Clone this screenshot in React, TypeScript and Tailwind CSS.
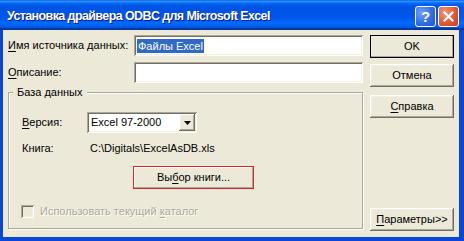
import React from "react";

const U = ({ c }: { c: string }) => (
  <span className="underline underline-offset-[2px] decoration-[1px]">{c}</span>
);

const raised =
  "shadow-[inset_-1px_-1px_#716F64,inset_1px_1px_#FFFFFF,inset_-2px_-2px_#ACA899,inset_2px_2px_#F1EFE2]";
const sunken =
  "shadow-[inset_1px_1px_#ACA899,inset_-1px_-1px_#FFFFFF,inset_2px_2px_#716F64,inset_-2px_-2px_#F1EFE2]";

function Btn({ children, cls = "" }: { children: React.ReactNode; cls?: string }) {
  return (
    <div
      className={`w-[84px] h-[23px] flex items-center justify-center bg-[#ECE9D8] text-black ${raised} ${cls}`}
    >
      {children}
    </div>
  );
}

export default function App() {
  return (
    <div
      className="w-[464px] h-[241px] flex flex-col bg-[#0A47D8] overflow-hidden text-[11px] leading-[13px] text-black"
      style={{ fontFamily: '"Liberation Sans", Arial, sans-serif' }}
    >
      {/* Title bar */}
      <div className="h-[30px] flex items-center pl-[7px] pr-[5px] pt-[2px] bg-[linear-gradient(180deg,#0058EE_0%,#3593FF_4%,#288EFF_6%,#127DFF_8%,#036FFC_10%,#0262EE_14%,#0057E5_20%,#0054E3_24%,#0055EB_56%,#005BF5_66%,#026AFE_76%,#0062EF_86%,#0052D6_92%,#0040AB_94%,#003092_100%)]">
        <div className="flex-1 text-white font-bold text-[12.5px] tracking-[-0.6px] leading-[16px] [text-shadow:1px_1px_0_#0A1883]">
          Установка драйвера ODBC для Microsoft Excel
        </div>
        <div className="flex gap-[2px]">
          <div className="w-[21px] h-[21px] rounded-[3px] border border-white bg-[radial-gradient(circle_at_30%_30%,#6FA0F7,#2F68E8_60%,#2158D8)] flex items-center justify-center text-white font-bold text-[15px] leading-none">
            ?
          </div>
          <div className="w-[21px] h-[21px] rounded-[3px] border border-white bg-[radial-gradient(circle_at_30%_30%,#F0957A,#E0542D_60%,#C8401A)] flex items-center justify-center">
            <svg width="11" height="11" viewBox="0 0 11 11">
              <path d="M1.5 1.5 L9.5 9.5 M9.5 1.5 L1.5 9.5" stroke="#fff" strokeWidth="2.2" strokeLinecap="square" />
            </svg>
          </div>
        </div>
      </div>

      {/* Body */}
      <div className="flex-1 flex ml-[3px] mr-[5px] mb-[4px] bg-[#ECE9D8]">
        {/* Left column */}
        <div className="flex flex-col pl-[5px] pt-[5px]">
          <div className="flex items-center h-[21px]">
            <div className="w-[126px]">
              <U c="И" />мя источника данных:
            </div>
            <div className={`w-[229px] h-[21px] bg-white flex items-center pl-[3px] ${sunken}`}>
              <span className="bg-[#316AC5] text-white px-[1px] leading-[14px]">Файлы Excel</span>
            </div>
          </div>
          <div className="flex items-center h-[21px] mt-[6px]">
            <div className="w-[126px]">
              <U c="О" />писание:
            </div>
            <div className={`w-[229px] h-[21px] bg-white ${sunken}`} />
          </div>

          {/* Group box */}
          <div className="mt-[9px] w-[355px] h-[137px] border border-[#ACA899] shadow-[1px_1px_0_#FFFFFF,inset_1px_1px_0_#FFFFFF] flex flex-col pl-[13px]">
            <span className="-mt-[7px] -ml-[9px] self-start px-[4px] bg-[#ECE9D8] leading-[13px]">
              База данных
            </span>
            <div className="flex items-center h-[21px] mt-[13px]">
              <div className="w-[65px]">
                <U c="В" />ерсия:
              </div>
              <div className={`w-[110px] h-[21px] bg-white flex items-center pl-[4px] pr-[2px] ${sunken}`}>
                <span className="flex-1">Excel 97-2000</span>
                <div className={`w-[16px] h-[17px] bg-[#ECE9D8] flex items-center justify-center ${raised}`}>
                  <svg width="7" height="4" viewBox="0 0 7 4">
                    <path d="M0 0 H7 L3.5 4 Z" fill="#000" />
                  </svg>
                </div>
              </div>
            </div>
            <div className="flex items-center h-[13px] mt-[9px]">
              <div className="w-[68px]">Книга:</div>
              <div>C:\Digitals\ExcelAsDB.xls</div>
            </div>
            <div className="ml-[111px] mt-[11px] w-[121px] h-[23px] border border-[#D8262B] bg-[#ECE9D8] flex items-center justify-center shadow-[inset_-1px_-1px_#ACA899,inset_1px_1px_#FFFFFF]">
              <span>
                Вы<U c="б" />ор книги...
              </span>
            </div>
            <div className="flex items-center mt-[16px] -ml-[1px]">
              <div className={`w-[13px] h-[13px] bg-[#ECE9D8] ${sunken}`} />
              <span className="ml-[6px] text-[#ACA899] [text-shadow:1px_1px_0_#FFFFFF]">
                Использовать текущий <U c="к" />аталог
              </span>
            </div>
          </div>
        </div>

        {/* Right column */}
        <div className="flex flex-col ml-[7px] pt-[5px] pb-[6px]">
          <Btn cls="outline outline-1 outline-black -outline-offset-1">OK</Btn>
          <Btn cls="mt-[6px]">Отмена</Btn>
          <Btn cls="mt-[8px]">
            <span>
              <U c="С" />правка
            </span>
          </Btn>
          <Btn cls="mt-auto">
            <span>
              <U c="П" />араметры&gt;&gt;
            </span>
          </Btn>
        </div>
      </div>
    </div>
  );
}
